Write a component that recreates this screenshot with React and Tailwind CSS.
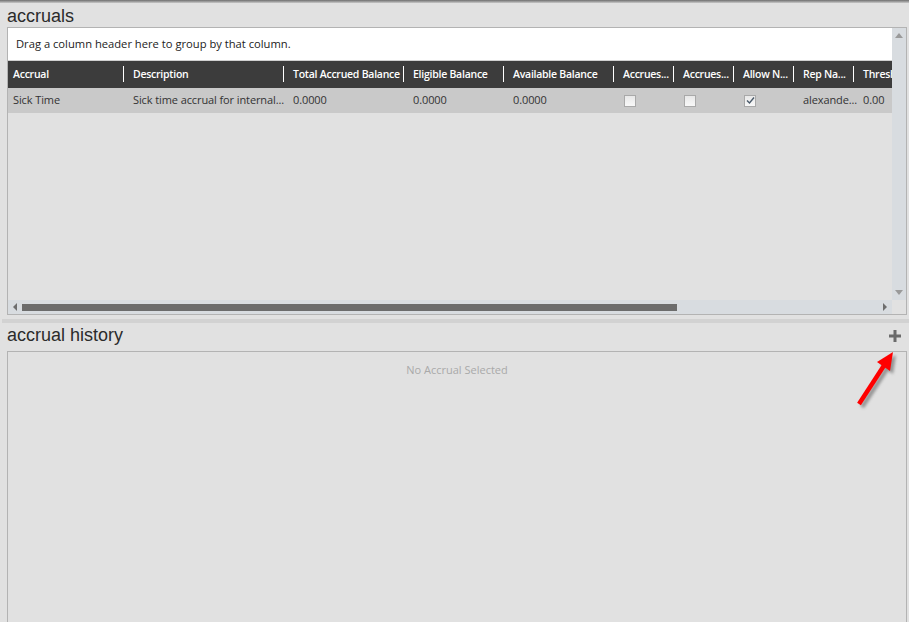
import React from "react";

const columns = [
  { label: "Accrual", width: 120 },
  { label: "Description", width: 160 },
  { label: "Total Accrued Balance", width: 120 },
  { label: "Eligible Balance", width: 100 },
  { label: "Available Balance", width: 110 },
  { label: "Accrues...", width: 60 },
  { label: "Accrues...", width: 60 },
  { label: "Allow N...", width: 60 },
  { label: "Rep Na...", width: 60 },
  { label: "Thresh", width: 34 },
];

const row = [
  { text: "Sick Time" },
  { text: "Sick time accrual for internal..." },
  { text: "0.0000" },
  { text: "0.0000" },
  { text: "0.0000" },
  { check: false },
  { check: false },
  { check: true },
  { text: "alexande..." },
  { text: "0.00" },
];

const CheckBox = ({ checked }) => (
  <div className="w-[12px] h-[12px] border border-[#a9a9a9] bg-gradient-to-b from-[#e8e8e8] to-[#f8f8f8] flex items-center justify-center ml-[1px]">
    {checked && (
      <svg width="9" height="9" viewBox="0 0 9 9">
        <path d="M1 4.5 L3.5 7 L8 1.5" fill="none" stroke="#4a5a6a" strokeWidth="1.4" />
      </svg>
    )}
  </div>
);

const Arrow = ({ dir }) => (
  <svg width="6" height="8" viewBox="0 0 6 8">
    {dir === "left" && <path d="M5 0 L1 4 L5 8 Z" fill="#6e6e6e" />}
    {dir === "right" && <path d="M1 0 L5 4 L1 8 Z" fill="#6e6e6e" />}
  </svg>
);

const App = () => {
  return (
    <div
      className="relative w-[909px] h-[622px] overflow-hidden bg-[#e1e1e1] text-[#2b2b2b]"
      style={{ fontFamily: "'Liberation Sans', Arial, sans-serif" }}
    >
      <div className="h-[3px] bg-gradient-to-b from-[#6f6f6f] to-[#c9c9c9]" />

      <h2 className="text-[18px] leading-[24px] pl-[7px] pt-[1px] h-[24px]">accruals</h2>

      <div
        className="ml-[7px] w-[900px] h-[288px] border border-[#b3b3b3] flex"
        style={{ fontFamily: "'Open Sans', 'Noto Sans', sans-serif" }}
      >
        <div className="w-[884px] flex flex-col overflow-hidden">
          <div className="h-[33px] bg-white flex items-center pl-[8px] text-[11.2px] text-[#222] border-b border-[#d0d0d0]">
            Drag a column header here to group by that column.
          </div>
          <div className="h-[27px] bg-[#3c3c3c] flex shrink-0">
            {columns.map((c, i) => (
              <div
                key={i}
                className="relative flex items-center pl-[5px] text-[10.5px] tracking-[-0.25px] font-semibold text-white whitespace-nowrap overflow-hidden shrink-0"
                style={{ width: c.width }}
              >
                {c.label}
                {i < columns.length - 1 && (
                  <div className="absolute right-[4px] top-[5px] w-px h-[16px] bg-white" />
                )}
              </div>
            ))}
          </div>
          <div className="h-[25px] bg-[#c9c9c9] flex shrink-0">
            {row.map((c, i) => (
              <div
                key={i}
                className="flex items-center pl-[5px] text-[11px] tracking-[-0.1px] text-[#333] whitespace-nowrap overflow-hidden shrink-0"
                style={{ width: columns[i].width }}
              >
                {c.text !== undefined ? c.text : <CheckBox checked={c.check} />}
              </div>
            ))}
          </div>
          <div className="flex-1" />
          <div className="h-[14px] bg-[#d8dce0] flex items-center px-[4px] gap-[4px]">
            <Arrow dir="left" />
            <div className="w-[655px] h-[7px] bg-[#6c6c6c]" />
            <div className="flex-1" />
            <Arrow dir="right" />
          </div>
        </div>
        <div className="w-[14px] flex flex-col">
          <div className="flex-1 bg-[#d8dce0] flex flex-col items-center justify-between py-[5px]">
            <svg width="8" height="5" viewBox="0 0 8 5">
              <path d="M0 5 L4 0 L8 5 Z" fill="#9a9a9a" />
            </svg>
            <svg width="8" height="5" viewBox="0 0 8 5">
              <path d="M0 0 L4 5 L8 0 Z" fill="#9a9a9a" />
            </svg>
          </div>
          <div className="h-[14px]" />
        </div>
      </div>

      <div className="h-[4px] mt-[4px] ml-[2px] bg-[#d2d2d2]" />

      <div className="flex items-end justify-between pl-[7px] pr-[8px] h-[24px]">
        <h2 className="text-[18px] leading-[24px]">accrual history</h2>
        <svg width="12" height="12" viewBox="0 0 12 12" className="mb-[5px]">
          <path d="M4.5 0 H7.5 V4.5 H12 V7.5 H7.5 V12 H4.5 V7.5 H0 V4.5 H4.5 Z" fill="#6b6b6b" />
        </svg>
      </div>

      <div
        className="ml-[7px] mt-[4px] w-[900px] h-[300px] border border-[#b3b3b3] flex justify-center pt-[10px]"
        style={{ fontFamily: "'Open Sans', 'Noto Sans', sans-serif" }}
      >
        <span className="text-[11px] text-[#a9a9a9]">No Accrual Selected</span>
      </div>

      <svg className="absolute left-[840px] top-[340px]" width="69" height="80" viewBox="0 0 69 80">
        <defs>
          <filter id="sh" x="-50%" y="-50%" width="200%" height="200%">
            <feGaussianBlur stdDeviation="1.6" />
          </filter>
        </defs>
        <g transform="translate(3,3)" filter="url(#sh)" opacity="0.55">
          <line x1="19" y1="64" x2="45" y2="24" stroke="#555" strokeWidth="4.5" />
          <path d="M53 12 L37 22 L50 31 Z" fill="#555" />
        </g>
        <line x1="19" y1="64" x2="45" y2="24" stroke="#ff0000" strokeWidth="4.5" />
        <path d="M53 12 L37 22 L50 31 Z" fill="#ff0000" />
      </svg>
    </div>
  );
};

export default App;
